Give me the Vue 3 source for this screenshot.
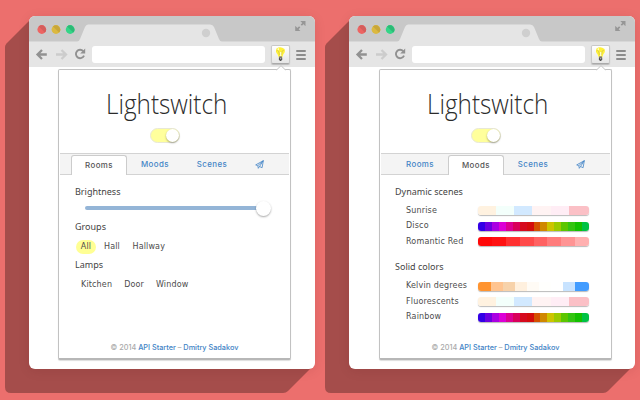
<script setup>
const pastel = [['#fff2e0', 18], ['#f3fffb', 18], ['#d2e9ff', 18], ['#fff3f3', 19], ['#ffedf5', 18], ['#fbc0c6', 20]]
const rainbow = ['#3300e6', '#6c00e0', '#aa00e2', '#dc00d6', '#dc0092', '#d9005a', '#d60a1e', '#d40c0c', '#d45000', '#d08800', '#cdc400', '#9cca00', '#5cc600', '#34c410', '#14c000', '#00c244'].map(c => [c, 7])
const reds = ['#ff0808', '#ff1111', '#ff3030', '#ff4a4a', '#ff6262', '#ff7c7c', '#ff9494', '#ffb0b0'].map(c => [c, 14])
const kelvin = [['#ff9430', 13], ['#ffc490', 12], ['#f7d2aa', 12], ['#fff0de', 12], ['#fffbf5', 12], ['#fffffd', 12], ['#ffffff', 12], ['#c8e3ff', 12], ['#429cff', 14]]
const scenes = [
  { title: 'Dynamic scenes', rows: [['Sunrise', pastel], ['Disco', rainbow], ['Romantic Red', reds]] },
  { title: 'Solid colors', rows: [['Kelvin degrees', kelvin], ['Fluorescents', pastel], ['Rainbow', rainbow]] }
]
const tabs = ['Rooms', 'Moods', 'Scenes']
const windows = ['Rooms', 'Moods']
</script>

<template>
  <main class="stage">
    <section v-for="active in windows" :key="active" class="slot" :class="active.toLowerCase()">
      <svg class="long-shadow" width="320" height="400" viewBox="0 0 320 400">
        <path d="M31 19 L6.5 43.5 Q5 45 5 47 V387 Q5 393 11 393 H283 Q286 393 288 391 L312 367Z" fill="#a54d4b" />
      </svg>
      <div class="window">
        <header class="titlebar">
          <svg width="286" height="26" viewBox="0 0 286 26">
            <path d="M0 26V25.5H48Q50 25.500 51 23L56 11Q57 8.500 59 8.500H181Q184 8.500 185 11L190 23Q191 25.500 193 25.500H286V26Z" fill="#e5e5e5" />
            <g v-for="(c, i) in [['#ed6462', '#d45d5b'], ['#dcb93f', '#c8a63b'], ['#34d587', '#2cba75']]" :key="i" :transform="`translate(${12.8 + i * 14.2} 13.5)`">
              <circle r="4.400" :fill="c[0]" />
              <path d="M-3.100-3.100A4.400 4.400 0 0 1 3.100 3.100Z" :fill="c[1]" />
            </g>
            <circle cx="177" cy="17" r="4.200" fill="#cfcfcf" />
            <g fill="#969696" stroke="#969696" stroke-width="1.700">
              <path d="M272.300 9.200 275.500 6M270.700 10.800 267.500 14" fill="none" />
              <path d="M271.300 5H276.500V10.200ZM266.200 9.700V14.900H271.400Z" stroke="none" />
            </g>
          </svg>
        </header>
        <div class="toolbar">
          <svg class="arrows" width="45" height="25" viewBox="0 0 45 25" fill="none" stroke-width="2.300">
            <path d="M17.800 12.500H9M13 8 8.500 12.500 13 17" stroke="#919191" />
            <path d="M27 12.500H36.500M32.500 8 37 12.500 32.500 17" stroke="#cccccc" />
          </svg>
          <svg class="reload" width="12" height="12" viewBox="0 0 12 12">
            <path d="M9.200 3.100A4.200 4.200 0 1 0 10 7.600" fill="none" stroke="#919191" stroke-width="1.900" />
            <path d="M11.200.4V5.400H6.200Z" fill="#919191" />
          </svg>
          <div class="address"></div>
          <div class="bulb">
            <svg width="17" height="17" viewBox="0 0 17 17">
              <path d="M4.500 2.500Q8.500 0 12.500 3Q13.800 6 11.300 8.200L10.200 11.500H6.800L5.500 8.200Q3 6 4.500 2.500Z" fill="#fff238" />
              <path d="M4.500 5Q5.500 4 6.500 5L7.500 9M9.500 9 10.200 5Q11.500 3.500 12 5" fill="none" stroke="#d6c34a" stroke-width=".8" />
              <path d="M5 3 7 2 7 4.500ZM8 6H9.300V10H8Z" fill="#fffcc8" />
              <path d="M7 10H10V12H7Z" fill="#a8a17c" />
              <path d="M6.900 11.500H10.200V13.500L9.100 15H8L6.900 13.500Z" fill="#505050" />
              <path d="M8 12.700H9.300" stroke="#ddd" stroke-width=".8" />
            </svg>
          </div>
          <div class="menu"><i></i><i></i><i></i></div>
        </div>
        <div class="page">
          <article class="popup">
            <svg class="notch" width="10" height="6" viewBox="0 0 10 6"><path d="M.5 5 5 .7 9.500 5V6H.5Z" fill="#fff" /><path d="M.5 5 5 .7 9.500 5" fill="none" stroke="#c4c4c4" /></svg>
            <h1><span>Lightswitch</span></h1>
            <div class="switch"><b></b></div>
            <nav>
              <a v-for="t in tabs" :key="t" :class="[{ active: t === active }, t.toLowerCase()]">{{ t }}</a>
              <a class="send">
                <svg width="9" height="9" viewBox="0 0 9 9"><path d="M8.300.7.7 4.900 2.800 5.700 8.300.7 7.100 7.700 4.500 6.500 3.300 8.300 2.900 5.800M4.500 6.500 8.300.7" fill="none" stroke="#4384c6" stroke-width=".8" /></svg>
              </a>
            </nav>
            <div v-if="active === 'Rooms'" class="rooms-body">
              <h2>Brightness</h2>
              <div class="slider"><div class="track"></div><b></b></div>
              <h2>Groups</h2>
              <div class="chips groups"><span class="on">All</span><span>Hall</span><span>Hallway</span></div>
              <h2>Lamps</h2>
              <div class="chips lamps"><span>Kitchen</span><span>Door</span><span>Window</span></div>
            </div>
            <div v-else class="moods-body">
              <section v-for="s in scenes" :key="s.title">
                <h2>{{ s.title }}</h2>
                <div v-for="[name, colors] in s.rows" :key="name" class="mood">
                  <span>{{ name }}</span>
                  <div class="swatches"><i v-for="([c, w], i) in colors" :key="i" :style="{ background: c, flexGrow: w }"></i></div>
                </div>
              </section>
            </div>
            <footer>© 2014 <a>API Starter</a> – <a>Dmitry Sadakov</a></footer>
          </article>
        </div>
      </div>
    </section>
  </main>
</template>

<style>
body { background: #ec6f6d; overflow: hidden; }
</style>

<style scoped>
* { box-sizing: border-box; }
.stage { display: flex; width: 640px; height: 400px; background: #ec6f6d; overflow: hidden; }
.slot { position: relative; width: 320px; height: 400px; padding: 16px 0 0 29px; flex: none; }
.long-shadow { position: absolute; left: 0; top: 0; }
.window { position: relative; width: 286px; height: 353px; border-radius: 6px; background: #fff; overflow: hidden; box-shadow: 0 2px 12px rgba(70, 10, 10, .1); display: flex; flex-direction: column; }
.titlebar { height: 26px; background: #c8c8c8; }
.titlebar svg { display: block; }
.toolbar { height: 25px; background: #e5e5e5; display: flex; align-items: center; flex: none; }
.toolbar > svg { flex: none; }
.toolbar .reload { margin-bottom: 1px; }
.address { width: 173px; height: 17px; margin-left: 6px; border-radius: 3px; background: #fff; flex: none; }
.bulb { width: 19px; height: 19px; margin-left: 6px; border: 1px solid #c9c9c9; border-bottom-color: #aaa; border-radius: 2px; background: linear-gradient(#fff, #e6e6e6); box-shadow: 0 1px 1px #bbb; flex: none; }
.bulb svg { display: block; }
.menu { display: flex; flex-direction: column; gap: 2px; margin-left: 6px; }
.menu i { width: 10px; height: 2px; border-radius: 1px; background: #8c8c8c; }
.page { padding: 2px 0 0 29px; }
.moods .page { padding-left: 30px; }
.popup { position: relative; width: 233px; height: 291px; border: 1px solid #c2c2c2; border-bottom: 2px solid #b7b7b7; border-radius: 2px; background: #fff; font-family: "Noto Sans", sans-serif; display: flex; flex-direction: column; box-shadow: 0 1px 1px #ddd; }
.notch { position: absolute; left: 217px; top: -5px; }
.moods .notch { left: 216px; }
h1 { margin: 17px 0 0 47px; height: 41px; font: 300 28px/32px "Open Sans", sans-serif; color: #2b2b2b; }
h1 span { display: inline-block; transform: scaleX(.867); transform-origin: left; }
.switch { width: 30px; height: 15px; margin-left: 91px; border: 1px solid #e8e8d6; border-radius: 8px; background: #ffff9c; display: flex; justify-content: flex-end; flex: none; }
.switch b, .slider b { border-radius: 50%; background: #fff; box-shadow: 0 1px 2px rgba(0, 0, 0, .35); }
.switch b { width: 13px; height: 13px; }
nav { margin: 10px 1px 0; height: 22px; background: #f4f4f4; border: solid #d3d3d3; border-width: 1px 0; display: flex; align-items: flex-end; padding-left: 11px; flex: none; font: 500 7.9px/18px "Inter", sans-serif; letter-spacing: .45px; color: #4384c6; }
nav a { width: 56px; height: 20px; text-align: center; border: 1px solid transparent; border-bottom: 0; border-radius: 3px 3px 0 0; flex: none; }
nav a.active { background: #fff; border-color: #ccc; color: #555; height: 20px; margin-bottom: -1px; }
nav .scenes { padding-left: 2px; }
nav .send { width: 40px; }
nav svg { vertical-align: -2px; }
h2 { margin: 0; font: 400 9px/12px "Noto Sans", sans-serif; color: #444; }
.rooms-body { padding: 11px 0 0 16px; }
.slider { display: flex; align-items: center; height: 16px; margin: 2px 0 0 10px; }
.track { width: 177px; height: 4px; border-radius: 2px 0 0 2px; background: #94b5d7; }
.slider b { width: 15px; height: 15px; margin-left: -6px; }
.slider + h2 { margin-top: 5px; }
.chips { display: flex; height: 14px; margin: 7px 0 5px; font: 8px/14px "DejaVu Sans", sans-serif; letter-spacing: .15px; color: #4c4c4c; }
.chips .on { width: 20px; text-align: center; background: #ffff94; border-radius: 7px; }
.groups { margin-left: 1px; }
.groups span + span { margin-left: 8px; }
.groups span:last-child { margin-left: 12.500px; }
.lamps { margin: 7px 0 0 6px; gap: 12px; }
.moods-body { padding: 11px 0 0 15px; }
.moods-body h2 { height: 17px; }
.moods-body section + section { margin-top: 11.500px; }
.mood { display: flex; height: 15.6px; align-items: center; padding-left: 11px; font: 8px/14px "DejaVu Sans", sans-serif; letter-spacing: .17px; color: #4c4c4c; }
.mood span { width: 72px; flex: none; white-space: nowrap; }
.swatches { display: flex; width: 111px; height: 9px; border-radius: 3px; overflow: hidden; box-shadow: 0 1px 1px #bbb; }
.swatches i { flex-basis: 0; }
footer { margin-top: auto; height: 14px; text-align: center; font: 500 7.3px/8px "Inter", sans-serif; color: #aaa; white-space: pre; }
footer a { color: #4384c6; }
</style>
